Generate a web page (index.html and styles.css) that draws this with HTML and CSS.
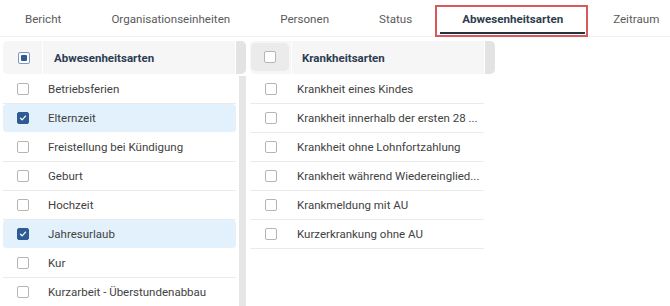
FILE: index.html
```html
<!DOCTYPE html>
<html lang="de">
<head>
<meta charset="utf-8">
<link rel="stylesheet" href="styles.css">
</head>
<body>
<div class="page">
  <nav class="tabs">
    <div class="tab">Bericht</div>
    <div class="tab">Organisationseinheiten</div>
    <div class="tab">Personen</div>
    <div class="tab">Status</div>
    <div class="tab active">Abwesenheitsarten<span class="mark"></span></div>
    <div class="tab">Zeitraum</div>
  </nav>
  <div class="panels">
    <section class="panel left">
      <div class="head">
        <div class="head-check"><span class="cb partial"></span></div>
        <div class="head-title">Abwesenheitsarten</div>
        <div class="head-scroll"></div>
      </div>
      <div class="body">
        <div class="list">
          <div class="row"><span class="cb"></span><span class="label">Betriebsferien</span></div>
          <div class="row sel"><span class="cb on"><svg viewBox="0 0 12 12"><path d="M3 6.3l2 2 4-4.6" /></svg></span><span class="label">Elternzeit</span></div>
          <div class="row"><span class="cb"></span><span class="label">Freistellung bei Kündigung</span></div>
          <div class="row"><span class="cb"></span><span class="label">Geburt</span></div>
          <div class="row"><span class="cb"></span><span class="label">Hochzeit</span></div>
          <div class="row sel"><span class="cb on"><svg viewBox="0 0 12 12"><path d="M3 6.3l2 2 4-4.6" /></svg></span><span class="label">Jahresurlaub</span></div>
          <div class="row"><span class="cb"></span><span class="label">Kur</span></div>
          <div class="row"><span class="cb"></span><span class="label">Kurzarbeit - Überstundenabbau</span></div>
        </div>
        <div class="scroll"></div>
      </div>
    </section>
    <section class="panel right">
      <div class="head">
        <div class="head-check boxed"><span class="cb"></span></div>
        <div class="head-title">Krankheitsarten</div>
        <div class="head-scroll"></div>
      </div>
      <div class="body">
        <div class="list">
          <div class="row"><span class="cb"></span><span class="label">Krankheit eines Kindes</span></div>
          <div class="row"><span class="cb"></span><span class="label">Krankheit innerhalb der ersten 28 ...</span></div>
          <div class="row"><span class="cb"></span><span class="label">Krankheit ohne Lohnfortzahlung</span></div>
          <div class="row"><span class="cb"></span><span class="label">Krankheit während Wiedereinglied...</span></div>
          <div class="row"><span class="cb"></span><span class="label">Krankmeldung mit AU</span></div>
          <div class="row"><span class="cb"></span><span class="label">Kurzerkrankung ohne AU</span></div>
        </div>
      </div>
    </section>
  </div>
</div>
</body>
</html>
```
FILE: styles.css
```css
* { box-sizing: border-box; }
html, body { margin: 0; padding: 0; background: #fff; overflow: hidden; }
body {
  font-family: Roboto, "Liberation Sans", Arial, sans-serif;
  font-size: 11.5px;
  color: #424242;
  width: 670px;
  height: 306px;
}
.page { height: 306px; overflow: hidden; }
.tabs {
  display: flex;
  height: 37px;
  border-bottom: 1px solid #f0f0f0;
}
.tab {
  position: relative;
  padding: 12px 25px 0;
  font-size: 11.6px;
  color: #5a5a5a;
  white-space: nowrap;
}
.tab.active {
  font-weight: 700;
  color: #2f3d4f;
}
.tab.active::after {
  content: "";
  position: absolute;
  left: 3px;
  right: 3px;
  bottom: 2px;
  height: 2px;
  background: #26313f;
}
.mark {
  position: absolute;
  left: -2px;
  right: 0;
  top: 5px;
  bottom: -1px;
  border: 2px solid #d9595a;
  pointer-events: none;
}
.panels {
  display: flex;
  padding: 4px 0 0 3px;
  gap: 4px;
}
.panel { display: flex; flex-direction: column; }
.panel.left { width: 243px; }
.panel.right { width: 245px; }
.head {
  display: flex;
  height: 33px;
  background: #f6f6f6;
  border-radius: 5px;
  align-items: stretch;
}
.head-check {
  width: 40px;
  display: flex;
  align-items: center;
  padding-left: 15px;
  border-right: 1px solid #fff;
}
.right .head-check {
  width: 38px;
  padding-left: 0;
  justify-content: center;
  border-right: none;
  margin-left: 1px;
}
.head-check.boxed {
  background: #ebebeb;
  border-radius: 5px;
  margin: 2px 0 3px 1px;
}
.head-title {
  flex: 1;
  display: flex;
  align-items: center;
  padding-left: 11px;
  font-weight: 700;
  color: #2d3c52;
  border-right: 1px solid #fff;
}
.right .head-title { padding-left: 10px; border-left: 1px solid #fff; margin-left: 2px; }
.head-scroll {
  width: 10px;
  background: #e3e3e3;
  border-radius: 0 5px 5px 0;
}
.body { display: flex; flex: 1; }
.list { flex: 1; padding-top: 1px; }
.right .list { padding-right: 11px; }
.scroll {
  width: 7px;
  margin-left: 3px;
  margin-top: 2px;
  background: #e6e6e6;
  height: 230px;
}
.row {
  display: flex;
  align-items: center;
  height: 29px;
  border-bottom: 1px solid #ebebeb;
  padding-left: 14px;
}
.right .row { padding-left: 15px; }
.row.sel {
  background: #e2f1fc;
  border-radius: 4px;
  border-bottom-color: #fff;
}
.label { margin-left: 19px; white-space: nowrap; }
.right .label { margin-left: 20px; }
.cb {
  width: 12px;
  height: 12px;
  border: 1px solid #b5b5b5;
  border-radius: 2px;
  background: #fff;
  flex: none;
  display: inline-flex;
  align-items: center;
  justify-content: center;
}
.cb.on {
  background: #2e5b93;
  border-color: #2e5b93;
}
.cb.on svg { width: 12px; height: 12px; }
.cb.on path { fill: none; stroke: #fff; stroke-width: 1.5; stroke-linecap: round; stroke-linejoin: round; }
.cb.partial {
  border-color: #7d98bd;
  padding: 2px;
}
.cb.partial::before {
  content: "";
  width: 6px;
  height: 6px;
  background: #2e5b93;
  border-radius: 1px;
}
```
